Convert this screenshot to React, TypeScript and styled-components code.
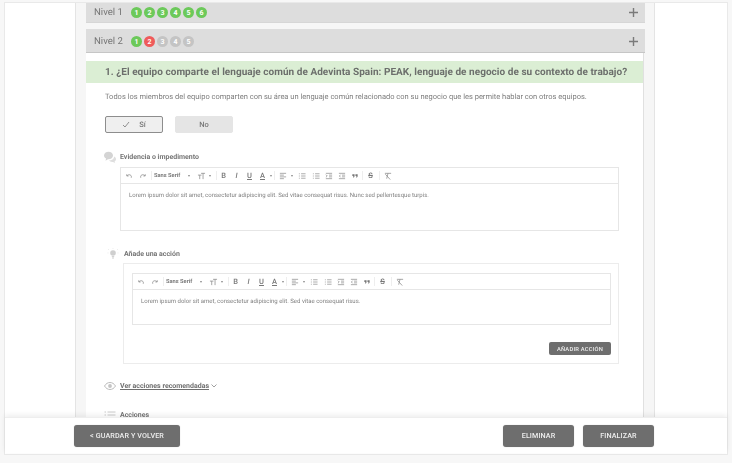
import React from "react";
import styled, { createGlobalStyle, css } from "styled-components";

const Global = createGlobalStyle`
  html, body { margin: 0; padding: 0; height: 100%; background: #f7f7f7; }
  body { font-family: Roboto, "Liberation Sans", sans-serif; color: #6f6f6f; overflow: hidden; text-rendering: geometricPrecision; }
  #root { height: 100%; }
`;

const grey = css`filter: blur(0.05px);`;

const Page = styled.div`
  width: 732px; height: 463px; box-sizing: border-box; padding: 3px 5px 9px 5px; display: flex;
  filter: blur(0.35px);
`;
const Sheet = styled.div`
  flex: 1; display: flex; flex-direction: column; min-height: 0; background: #fff;
  box-shadow: 0 0 0 1px #e9e9e9;
`;
const Scroll = styled.div`
  height: 414px; overflow: hidden; display: flex; justify-content: flex-start; padding-left: 70px;
`;
const Column = styled.div`
  width: 580px; box-sizing: border-box; flex: none; background: #f6f6f6; padding: 0 9px 0 10px;
  border-left: 1px solid #e4e4e4; border-right: 1px solid #e4e4e4; height: 500px;
`;
const Header = styled.div<{ $h: number; $mb: number; $bd?: boolean }>`
  height: ${p => p.$h}px; margin-bottom: ${p => p.$mb}px; background: #dddddd; display: flex; align-items: center;
  padding: ${p => (p.$bd ? 2 : 0)}px 7px 0 8px; box-sizing: border-box; border-bottom: 1px solid ${p => (p.$bd ? "#c6c6c6" : "#d6d6d6")};
`;
const Title = styled.span`
  font-size: 9.6px; font-weight: 400; color: #757575; width: 37px; ${grey}
`;
const Dots = styled.div`display: flex; gap: 2px; flex: 1;`;
const Dot = styled.span<{ $c: string }>`
  width: 11px; height: 11px; border-radius: 50%; background: ${p => p.$c}; color: #fff; font-size: 7px; font-weight: 700;
  display: flex; align-items: center; justify-content: center;
`;
const Plus = styled.svg`width: 9px; height: 9px; stroke: #7a7a7a; stroke-width: 1.4;`;
const Body = styled.div`
  background: #fff; padding-top: 8px; box-sizing: border-box; height: 470px; margin-right: 1px;
  border-right: 1px solid #e0e0e0;
`;
const Question = styled.div`
  height: 22px; background: #dbeed4; display: flex; align-items: center; padding-left: 19px;
`;
const QuestionText = styled.span`
  font-size: 10px; font-weight: 700; color: #6c6f6c; letter-spacing: .04px; white-space: nowrap; ${grey}
`;
const Desc = styled.p`
  margin: 9px 0 0 19px; font-size: 7.5px; line-height: 10px; color: #7d7d7d; white-space: nowrap; ${grey}
`;
const Choices = styled.div`display: flex; gap: 12px; margin: 14px 0 0 19px;`;
const Choice = styled.div<{ $on?: boolean }>`
  width: 58px; height: 17px; box-sizing: border-box; border-radius: 2px; background: ${p => (p.$on ? "#efefef" : "#e5e5e5")};
  border: 1px solid ${p => (p.$on ? "#8d8d8d" : "#e5e5e5")}; display: flex; align-items: center; justify-content: center;
  gap: 9px;
`;
const ChoiceText = styled.span`font-size: 7.5px; font-weight: 500; color: #777; ${grey}`;
const Section = styled.div<{ $mt: number; $ml: number; $gap: number }>`
  margin: ${p => p.$mt}px 0 0 ${p => p.$ml}px; display: flex; align-items: center; gap: ${p => p.$gap}px; height: 12px;
  font-size: 7px; font-weight: 700; color: #767676;
`;
const SectionText = styled.span`${grey}`;
const IconSlot = styled.svg`width: 12px; height: 12px; flex: none;`;
const Editor = styled.div<{ $h: number }>`
  height: ${p => p.$h}px; box-sizing: border-box; border: 1px solid #e6e6e6; background: #fff;
`;
const FirstEditor = styled.div`margin: 4px 24px 0 34px;`;
const ActionBox = styled.div`
  margin: 3px 24px 0 37px; height: 101px; box-sizing: border-box; border: 1px solid #ececec; padding: 9px 7px 0 8px;
`;
const Toolbar = styled.div`
  height: 15px; border-bottom: 1px solid #e6e6e6; display: flex; align-items: center; color: #777;
`;
const Sep = styled.span<{ $l: number; $r: number }>`
  width: 1px; height: 9px; background: #eee; margin: 0 ${p => p.$r}px 0 ${p => p.$l}px; flex: none;
`;
const Slot = styled.span<{ $w: number }>`
  width: ${p => p.$w}px; flex: none; display: flex; align-items: center; justify-content: center; height: 9px;
`;
const Tool = styled.svg<{ $w?: number }>`
  width: ${p => p.$w ?? 8}px; height: 8px; flex: none; fill: none; stroke: #8a8a8a;
`;
const FontName = styled.span`font-size: 5.7px; font-weight: 700; color: #7a7a7a; width: 27px; flex: none; white-space: nowrap; ${grey}`;
const Letter = styled.span<{ $i?: boolean; $u?: boolean; $s?: boolean }>`
  font-size: 7.5px; line-height: 9px; font-weight: 500; color: #777; font-style: ${p => (p.$i ? "italic" : "normal")};
  text-decoration: ${p => (p.$u ? "underline" : p.$s ? "line-through" : "none")}; ${grey}
`;
const Caret = styled.span`
  width: 0; height: 0; border-left: 1.5px solid transparent; border-right: 1.5px solid transparent; border-top: 2px solid #888;
`;
const EditorText = styled.div`
  padding: 8px 0 0 8px; font-size: 6px; line-height: 8px; color: #808080; white-space: nowrap; ${grey}
`;
const ActionRow = styled.div`display: flex; justify-content: flex-end; margin-top: 17px;`;
const AddBtn = styled.button`
  width: 62px; height: 13px; border: 0; padding: 0; border-radius: 2px; background: #6e6e6e; color: #eee; font-family: inherit;
  font-size: 5.8px; font-weight: 500; letter-spacing: .2px;
`;
const Recommend = styled.a`text-decoration: underline; color: #6f6f6f; ${grey}`;
const Chevron = styled.svg`width: 6px; height: 4px; margin-left: -2px; fill: none; stroke: #888; stroke-width: .8;`;
const Footer = styled.div`
  height: 36px; box-sizing: border-box; background: #fff; position: relative; display: flex; align-items: center;
  justify-content: space-between; padding: 0 73px 0 69px; box-shadow: 0 -2px 5px rgba(0,0,0,.07); border-top: 1px solid #eee;
`;
const Right = styled.div`display: flex; gap: 9px;`;
const FootBtn = styled.button<{ $w: number }>`
  width: ${p => p.$w}px; height: 22px; border: 0; padding: 0; border-radius: 3px; background: #6e6e6e; color: #eee;
  font-family: inherit; font-size: 7.2px; font-weight: 500; letter-spacing: .1px; box-shadow: 0 0 1px rgba(0,0,0,.3);
`;
const BtnText = styled.span`display: inline-block; ${grey}`;

const Undo = ({ flip }: { flip?: boolean }) => (
  <Tool viewBox="0 0 18 18" style={flip ? { transform: "scaleX(-1)" } : undefined}>
    <path d="M4 5v4h4M4.5 9C6 6.5 9 5.5 11.5 6.5 14 7.5 15 10.5 14 13" strokeWidth="1.7" />
  </Tool>
);
const Lines = ({ kind }: { kind: "align" | "ol" | "ul" | "in" | "out" }) => (
  <Tool viewBox="0 0 18 18">
    {kind === "align" && <path d="M2 3h14M2 7h9M2 11h14M2 15h9" strokeWidth="1.6" />}
    {(kind === "ol" || kind === "ul") && <path d="M7 4h10M7 9h10M7 14h10M2 4h2M2 9h2M2 14h2" strokeWidth="1.6" />}
    {kind === "in" && <path d="M2 3h14M9 7h7M9 11h7M2 15h14M2 6l3 3-3 3" strokeWidth="1.6" />}
    {kind === "out" && <path d="M2 3h14M9 7h7M9 11h7M2 15h14M6 6L3 9l3 3" strokeWidth="1.6" />}
  </Tool>
);

const Bar = () => (
  <Toolbar>
    <Slot $w={15}><Undo /></Slot>
    <Slot $w={14}><Undo flip /></Slot>
    <Sep $l={1} $r={2} />
    <FontName>Sans Serif</FontName>
    <Slot $w={16}><Caret /></Slot>
    <Slot $w={9}>
      <Tool viewBox="0 0 18 18" $w={9}><path d="M1 7h8M5 7v9M8 3h9M12.5 3v13" strokeWidth="1.7" /></Tool>
    </Slot>
    <Slot $w={7}><Caret /></Slot>
    <Sep $l={3} $r={0} />
    <Slot $w={13}><Letter>B</Letter></Slot>
    <Slot $w={13}><Letter $i>I</Letter></Slot>
    <Slot $w={13}><Letter $u>U</Letter></Slot>
    <Slot $w={13}><Letter $u>A</Letter></Slot>
    <Slot $w={4}><Caret /></Slot>
    <Sep $l={1} $r={1} />
    <Slot $w={13}><Lines kind="align" /></Slot>
    <Slot $w={6}><Caret /></Slot>
    <Slot $w={14}><Lines kind="ol" /></Slot>
    <Slot $w={13}><Lines kind="ul" /></Slot>
    <Slot $w={13}><Lines kind="in" /></Slot>
    <Slot $w={13}><Lines kind="out" /></Slot>
    <Slot $w={14}>
      <Tool viewBox="0 0 18 18"><path d="M3 5h5v4c0 2-1 3-3 4V9H3zM10 5h5v4c0 2-1 3-3 4V9h-2z" fill="#777" stroke="none" /></Tool>
    </Slot>
    <Sep $l={0} $r={0} />
    <Slot $w={15}><Letter $s>S</Letter></Slot>
    <Sep $l={1} $r={1} />
    <Slot $w={13}>
      <Tool viewBox="0 0 18 18"><path d="M2 3h14M9 3L6 15M3 5l11 12" strokeWidth="1.7" /></Tool>
    </Slot>
  </Toolbar>
);

const PlusIcon = () => (
  <Plus viewBox="0 0 9 9"><path d="M4.5 0v9M0 4.5h9" /></Plus>
);

const G = "#6cc95a", R = "#ef5b5b", N = "#c4c4c4";

export default function App() {
  return (
    <Page>
      <Global />
      <Sheet>
        <Scroll>
          <Column>
            <Header $h={20} $mb={6}>
              <Title>Nivel 1</Title>
              <Dots>{[1, 2, 3, 4, 5, 6].map(n => <Dot key={n} $c={G}>{n}</Dot>)}</Dots>
              <PlusIcon />
            </Header>
            <Header $h={24} $mb={0} $bd>
              <Title>Nivel 2</Title>
              <Dots>
                <Dot $c={G}>1</Dot>
                <Dot $c={R}>2</Dot>
                {[3, 4, 5].map(n => <Dot key={n} $c={N}>{n}</Dot>)}
              </Dots>
              <PlusIcon />
            </Header>
            <Body>
              <Question><QuestionText>1. ¿El equipo comparte el lenguaje común de Adevinta Spain: PEAK, lenguaje de negocio de su contexto de trabajo?</QuestionText></Question>
              <Desc>Todos los miembros del equipo comparten con su área un lenguaje común relacionado con su negocio que les permite hablar con otros equipos.</Desc>
              <Choices>
                <Choice $on>
                  <svg width="8" height="7" viewBox="0 0 8 7" fill="none" stroke="#777" strokeWidth=".8"><path d="M1 4l2 2 4-5" /></svg>
                  <ChoiceText>Sí</ChoiceText>
                </Choice>
                <Choice><ChoiceText>No</ChoiceText></Choice>
              </Choices>
              <Section $mt={18} $ml={18} $gap={4}>
                <IconSlot viewBox="0 0 12 12">
                  <path d="M0 4.5C0 2.3 2 .8 4.5.8S9 2.3 9 4.5 7 8.2 4.5 8.2H4L1.5 9.8l.6-2.2C.8 6.9 0 5.8 0 4.5z" fill="#d4d4d4" />
                  <path d="M5 9.5c2.6 0 5-1.4 5.2-4 1 .6 1.8 1.5 1.8 2.7 0 1-.6 1.8-1.4 2.3l.4 1.5-2-1.1c-1.6.2-3.2-.3-4-1.4z" fill="#dedede" />
                </IconSlot>
                <SectionText>Evidencia o impedimento</SectionText>
              </Section>
              <FirstEditor>
                <Editor $h={64}>
                  <Bar />
                  <EditorText>Lorem ipsum dolor sit amet, consectetur adipiscing elit. Sed vitae consequat risus. Nunc sed pellentesque turpis.</EditorText>
                </Editor>
              </FirstEditor>
              <Section $mt={17} $ml={21} $gap={5}>
                <IconSlot viewBox="0 0 12 12">
                  <circle cx="6" cy="5" r="2.8" fill="#cfcfcf" />
                  <path d="M4.8 8.6h2.4M5 10h2" stroke="#cfcfcf" />
                  <path d="M6 0v1M1 1l1 1M11 1l-1 1M.5 5h1M10.5 5h1" stroke="#e2e2e2" strokeWidth=".6" />
                </IconSlot>
                <SectionText>Añade una acción</SectionText>
              </Section>
              <ActionBox>
                <Editor $h={52}>
                  <Bar />
                  <EditorText>Lorem ipsum dolor sit amet, consectetur adipiscing elit. Sed vitae consequat risus.</EditorText>
                </Editor>
                <ActionRow><AddBtn><BtnText>AÑADIR ACCIÓN</BtnText></AddBtn></ActionRow>
              </ActionBox>
              <Section $mt={16} $ml={18} $gap={4}>
                <IconSlot viewBox="0 0 12 12">
                  <path d="M.5 6C2 3.6 3.8 2.5 6 2.5S10 3.6 11.5 6C10 8.4 8.2 9.5 6 9.5S2 8.4.5 6z" fill="none" stroke="#bbb" />
                  <circle cx="6" cy="6" r="1.9" fill="#c4c4c4" />
                </IconSlot>
                <Recommend>Ver acciones recomendadas</Recommend>
                <Chevron viewBox="0 0 6 4"><path d="M.5.5L3 3 5.5.5" /></Chevron>
              </Section>
              <Section $mt={17} $ml={18} $gap={4}>
                <IconSlot viewBox="0 0 12 12"><path d="M3.5 3h8M3.5 6h8M3.5 9h8M.5 3h1.5M.5 6h1.5M.5 9h1.5" stroke="#bdbdbd" strokeWidth=".8" /></IconSlot>
                <SectionText>Acciones</SectionText>
              </Section>
            </Body>
          </Column>
        </Scroll>
        <Footer>
          <FootBtn $w={106}><BtnText>&lt; GUARDAR Y VOLVER</BtnText></FootBtn>
          <Right>
            <FootBtn $w={71}><BtnText>ELIMINAR</BtnText></FootBtn>
            <FootBtn $w={71}><BtnText>FINALIZAR</BtnText></FootBtn>
          </Right>
        </Footer>
      </Sheet>
    </Page>
  );
}
